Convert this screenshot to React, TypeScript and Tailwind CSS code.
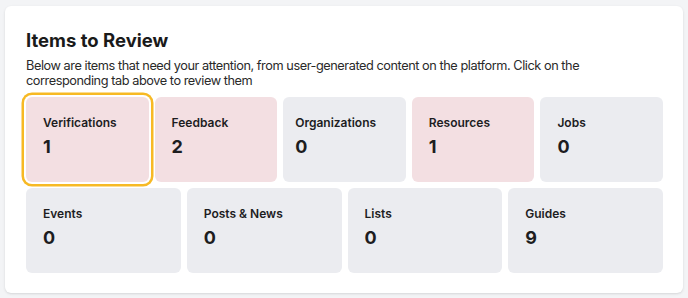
const topRow = [
  { label: 'Verifications', count: 1, flagged: true, selected: true },
  { label: 'Feedback', count: 2, flagged: true },
  { label: 'Organizations', count: 0, tight: true },
  { label: 'Resources', count: 1, flagged: true },
  { label: 'Jobs', count: 0 },
]

const bottomRow = [
  { label: 'Events', count: 0 },
  { label: 'Posts & News', count: 0 },
  { label: 'Lists', count: 0 },
  { label: 'Guides', count: 9 },
]

type Item = { label: string; count: number; flagged?: boolean; selected?: boolean; tight?: boolean }

function ReviewTile({ item }: { item: Item }) {
  return (
    <button
      className={`h-[85px] rounded-md pt-4 text-left flex flex-col ${item.tight ? 'pl-3' : 'pl-[17px]'} ${
        item.flagged ? 'bg-[#f3dfe2]' : 'bg-[#ebecf0]'
      } ${item.selected ? 'ring-[2.5px] ring-[#f7b924] ring-offset-2 ring-offset-white' : ''}`}
    >
      <span className="text-xs leading-5 font-semibold text-[#1d1d1f]">{item.label}</span>
      <span className="text-lg leading-7 font-bold text-[#1d1d1f]">{item.count}</span>
    </button>
  )
}

export default function App() {
  return (
    <div className="min-h-[298px] bg-[#f3f4f6] pt-[6px] px-[5px] pb-[5px] font-['Inter',sans-serif]">
      <div className="bg-white rounded-md shadow-sm pl-[21px] pr-[20px] pt-[20px] pb-[20px]">
        {/* Header */}
        <h2 className="text-[18.5px] leading-7 font-bold text-[#1a1a1a]">Items to Review</h2>
        <p className="mt-1 text-[12.75px] leading-[15px] tracking-[-0.45px] text-[#2a2a2a]">
          Below are items that need your attention, from user-generated content on the platform. Click on the
          corresponding tab above to review them
        </p>

        {/* Tiles */}
        <div className="mt-[9px] flex flex-col gap-[6px]">
          <div className="grid grid-cols-5 gap-[6px]">
            {topRow.map((item) => (
              <ReviewTile key={item.label} item={item} />
            ))}
          </div>
          <div className="grid grid-cols-4 gap-[6px]">
            {bottomRow.map((item) => (
              <ReviewTile key={item.label} item={item} />
            ))}
          </div>
        </div>
      </div>
    </div>
  )
}
